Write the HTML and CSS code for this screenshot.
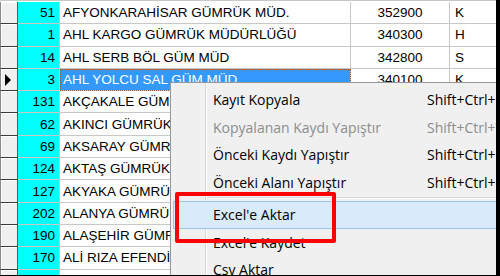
FILE: index.html
```html
<!DOCTYPE html>
<html lang="tr">
<head>
    <meta charset="UTF-8">
    <title>Gümrük Listesi</title>
    <link rel="stylesheet" href="styles.css">
</head>
<body>
    <div class="screen">
        <!-- GRID -->
        <div class="grid">
            <div class="row"><div class="ind"></div><div class="num">51</div><div class="name">AFYONKARAHİSAR GÜMRÜK MÜD.</div><div class="code">352900</div><div class="kind">K</div></div>
            <div class="row"><div class="ind"></div><div class="num">1</div><div class="name">AHL KARGO GÜMRÜK MÜDÜRLÜĞÜ</div><div class="code">340300</div><div class="kind">H</div></div>
            <div class="row"><div class="ind"></div><div class="num">14</div><div class="name">AHL SERB BÖL GÜM MÜD</div><div class="code">342800</div><div class="kind">S</div></div>
            <div class="row current"><div class="ind"><span class="arrow"></span></div><div class="num">3</div><div class="name selected">AHL YOLCU SAL GÜM MÜD</div><div class="code">340100</div><div class="kind">K</div></div>
            <!-- rows below are mostly hidden by the menu -->
            <div class="row"><div class="ind"></div><div class="num">131</div><div class="name">AKÇAKALE GÜMRÜK</div><div class="code"></div><div class="kind"></div></div>
            <div class="row"><div class="ind"></div><div class="num">62</div><div class="name">AKINCI GÜMRÜK</div><div class="code"></div><div class="kind"></div></div>
            <div class="row"><div class="ind"></div><div class="num">69</div><div class="name">AKSARAY GÜMRÜK</div><div class="code"></div><div class="kind"></div></div>
            <div class="row"><div class="ind"></div><div class="num">124</div><div class="name">AKTAŞ GÜMRÜK</div><div class="code"></div><div class="kind"></div></div>
            <div class="row"><div class="ind"></div><div class="num">127</div><div class="name">AKYAKA GÜMRÜK</div><div class="code"></div><div class="kind"></div></div>
            <div class="row"><div class="ind"></div><div class="num">202</div><div class="name">ALANYA GÜMRÜK</div><div class="code"></div><div class="kind"></div></div>
            <div class="row"><div class="ind"></div><div class="num">190</div><div class="name">ALAŞEHİR GÜMRÜK</div><div class="code"></div><div class="kind"></div></div>
            <div class="row"><div class="ind"></div><div class="num">170</div><div class="name">ALİ RIZA EFENDİ</div><div class="code"></div><div class="kind"></div></div>
            <div class="row"><div class="ind"></div><div class="num"></div><div class="name"></div><div class="code"></div><div class="kind"></div></div>
        </div>

        <!-- CONTEXT MENU -->
        <div class="menu">
            <div class="item"><span class="label">Kayıt Kopyala</span><span class="keys">Shift+Ctrl+C</span></div>
            <div class="item disabled"><span class="label">Kopyalanan Kaydı Yapıştır</span><span class="keys">Shift+Ctrl+V</span></div>
            <div class="item"><span class="label">Önceki Kaydı Yapıştır</span><span class="keys">Shift+Ctrl+R</span></div>
            <div class="item"><span class="label">Önceki Alanı Yapıştır</span><span class="keys">Shift+Ctrl+F</span></div>
            <div class="sep"></div>
            <div class="item hover"><span class="label">Excel'e Aktar</span></div>
            <div class="item"><span class="label">Excel'e Kaydet</span></div>
            <div class="item"><span class="label">Csv Aktar</span></div>
        </div>

        <!-- red annotation box -->
        <div class="mark"></div>
    </div>
</body>
</html>
```

FILE: styles.css
```css
body {
    margin: 0;
    background-color: #000;
}
.screen {
    position: relative;
    width: 496px;
    height: 275px;
    overflow: hidden;
    background-color: #fff;
}
.grid {
    padding-top: 1px;
    border-top: 1px solid #c8c8c8;
}
.row {
    display: grid;
    grid-template-columns: 18px 42px 291px 99px 1fr;
    height: 22.3px;
    font-family: 'Liberation Sans', Arial, sans-serif;
    font-size: 13.5px;
    color: #000;
}
.row > div {
    box-sizing: border-box;
    display: flex;
    align-items: center;
    white-space: nowrap;
    overflow: hidden;
    border-right: 1px solid #c8c8c8;
    border-bottom: 1px solid #c8c8c8;
}
.row > .ind {
    background-color: #f0f0f0;
    border-left: 1px solid #8a8a8a;
    border-right: 1px solid #5a5a5a;
    border-bottom: 1px solid #3c3c3c;
    box-shadow: inset 1px 1px #fff;
    padding-left: 4px;
}
.arrow {
    width: 0;
    height: 0;
    border-left: 6px solid #000;
    border-top: 6px solid transparent;
    border-bottom: 6px solid transparent;
}
.row > .num {
    background-color: #00ffff;
    justify-content: flex-end;
    padding-right: 4px;
}
.row > .name {
    padding-left: 3px;
}
.row > .selected {
    background-color: #3399ff;
    color: #fff;
    outline: 1px dotted #a0522d;
    outline-offset: -1px;
}
.row > .code {
    justify-content: center;
}
.row > .kind {
    padding-left: 5px;
    border-right: none;
}
.menu {
    position: absolute;
    left: 170px;
    top: 82px;
    width: 340px;
    box-sizing: border-box;
    padding: 3px 2px;
    background-color: #f0f0f0;
    border: 1px solid #979797;
    font-family: 'Open Sans', 'Noto Sans', sans-serif;
    font-size: 14px;
    color: #000;
    background-image: linear-gradient(#d7d7d7, #d7d7d7), linear-gradient(#fff, #fff);
    background-size: 1px 100%, 1px 100%;
    background-position: 34px 0, 35px 0;
    background-repeat: no-repeat;
}
.item {
    display: flex;
    align-items: center;
    height: 27.5px;
    box-sizing: border-box;
    padding-left: 39px;
    border: 1px solid transparent;
}
.item .label {
    width: 214px;
}
.item.disabled {
    color: #8d8d8d;
}
.item.hover {
    background-color: #d9eafb;
    border-color: #9ac6ee;
}
.sep {
    height: 5px;
    margin-left: 34px;
    background-image: linear-gradient(#d7d7d7, #d7d7d7), linear-gradient(#fff, #fff);
    background-size: 100% 1px, 100% 1px;
    background-position: 0 1px, 0 2px;
    background-repeat: no-repeat;
}
.mark {
    position: absolute;
    left: 175px;
    top: 192px;
    width: 161px;
    height: 51px;
    box-sizing: border-box;
    border: 4px solid #f00;
    border-radius: 2px;
}
```
